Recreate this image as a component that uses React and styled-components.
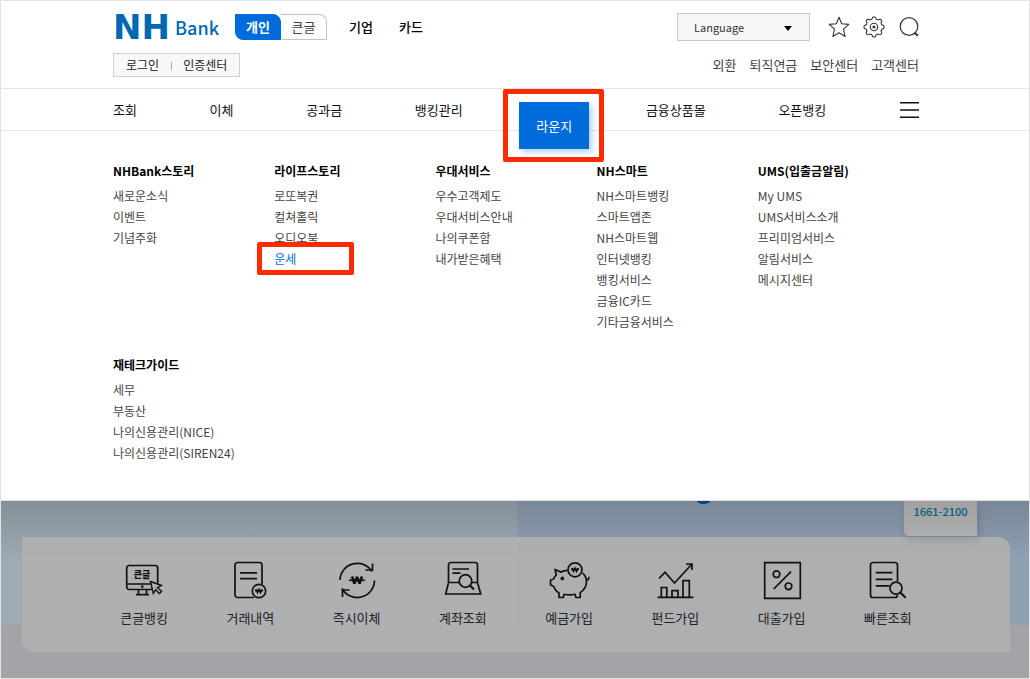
import React from 'react'
import styled, { createGlobalStyle } from 'styled-components'

const GlobalStyle = createGlobalStyle`
  *,
  *::before,
  *::after {
    box-sizing: border-box;
  }
  body {
    margin: 0;
    background: #fff;
    color: #111;
    font-family: "Noto Sans CJK KR", "Noto Sans", sans-serif;
    font-size: 13px;
    line-height: 20px;
  }
  a {
    color: inherit;
    text-decoration: none;
  }
  ul {
    margin: 0;
    padding: 0;
    list-style: none;
  }
  button,
  select {
    font: inherit;
    color: inherit;
  }
`

const Page = styled.div`
  border: 1px solid #e3e3e3;
`

const Container = styled.div`
  padding: 0 110px 0 112px;
`

const Header = styled.header`
  padding: 12px 0 11px;
`

const Bar = styled(Container)`
  display: flex;
  align-items: center;
  justify-content: space-between;
  & + & {
    margin-top: 12px;
  }
`

const Group = styled.div`
  display: flex;
  align-items: center;
  gap: ${({ $gap }) => $gap}px;
`

const Logo = styled.a`
  display: flex;
  align-items: center;
  justify-content: space-between;
  width: 106px;
  height: 28px;
  line-height: 28px;
  color: #0067b3;
`

const LogoMark = styled.span`
  font-family: "DejaVu Sans", sans-serif;
  font-size: 34px;
  font-weight: 700;
`

const LogoName = styled.span`
  font-size: 18px;
  font-weight: 500;
`

const Tabs = styled.div`
  display: flex;
  height: 26px;
  margin: 0 6px 0 16px;
`

const Tab = styled.a`
  width: 46px;
  border: 1px solid ${({ $active }) => ($active ? '#006bdb' : '#c4c4c4')};
  border-left-width: ${({ $active }) => ($active ? 1 : 0)}px;
  border-radius: ${({ $active }) => ($active ? '0 8px 0 8px' : '0 8px 0 0')};
  background: ${({ $active }) => ($active ? '#006bdb' : '#fff')};
  color: ${({ $active }) => ($active ? '#fff' : '#444')};
  font-weight: ${({ $active }) => ($active ? 700 : 400)};
  line-height: 23px;
  text-align: center;
`

const TopLink = styled.a`
  margin-left: 16px;
  font-weight: 500;
  color: #000;
  & + & {
    margin-left: 26px;
  }
`

const SelectBox = styled.div`
  position: relative;
  width: 133px;
  margin-right: 4px;
  svg {
    position: absolute;
    top: 13px;
    right: 18px;
    pointer-events: none;
  }
`

const Select = styled.select`
  display: block;
  width: 100%;
  height: 28px;
  padding: 0 16px;
  appearance: none;
  border: 1px solid #c9c9c9;
  border-radius: 0;
  background: #f8f8f8;
  color: #333;
  font-size: 11px;
`

const IconButton = styled.button`
  display: block;
  width: 20px;
  height: 20px;
  padding: 0;
  border: 0;
  background: none;
  svg {
    display: block;
    overflow: visible;
  }
`

const LoginBox = styled.div`
  display: flex;
  align-items: center;
  height: 24px;
  padding: 0 12px;
  border: 1px solid #cfcfcf;
  background: #f8f8f8;
  font-size: 12px;
  color: #222;
  a + a::before {
    content: "";
    display: inline-block;
    width: 1px;
    height: 8px;
    margin: 0 11px 0 12px;
    background: #aaa;
  }
`

const UtilLinks = styled(Group)`
  color: #444;
`

const Nav = styled.nav`
  height: 43px;
  border-top: 1px solid #e6e6e6;
  border-bottom: 1px solid #e6e6e6;
`

const NavRow = styled(Container)`
  display: flex;
  justify-content: space-between;
  height: 41px;
  font-size: 13px;
  line-height: 41px;
`

const ActiveLink = styled.a`
  position: relative;
  z-index: 2;
  height: 47px;
  margin: 13px -16px 0;
  padding: 0 17px;
  background: #006bdb;
  box-shadow: 3px 3px 6px rgba(0, 107, 219, .3);
  color: #fff;
  line-height: 47px;
  &::after {
    content: "";
    position: absolute;
    inset: -13px -15px -13px -16px;
    border: 5px solid #ff2a00;
    border-radius: 2px;
  }
`

const MenuButton = styled(IconButton)`
  align-self: center;
`

const Mega = styled.section`
  border-bottom: 1px solid #ddd;
  background: #fff;
`

const MegaGrid = styled(Container)`
  display: grid;
  grid-template-columns: repeat(5, 1fr);
  row-gap: 23px;
  padding-top: 30px;
  padding-bottom: 37px;
`

const MegaTitle = styled.h2`
  margin: 0 0 4px;
  font-size: 12px;
  font-weight: 700;
  line-height: 20px;
  color: #000;
`

const MegaItem = styled.li`
  position: relative;
  font-size: 12px;
  line-height: 21px;
  color: ${({ $marked }) => ($marked ? '#006bdb' : '#444')};
  &::after {
    content: "";
    display: ${({ $marked }) => ($marked ? 'block' : 'none')};
    position: absolute;
    top: -6px;
    left: -17px;
    width: 97px;
    height: 33px;
    border: 5px solid #ff2a00;
    border-radius: 2px;
  }
`

const Backdrop = styled.main`
  position: relative;
  padding: 36px 19px 26px 21px;
  background:
    linear-gradient(rgba(0, 0, 0, .16), rgba(0, 0, 0, 0)) 0 0 / 100% 60px no-repeat,
    linear-gradient(90deg, #9eaab4 calc(50% + 2px), #90a1b4 calc(50% + 2px)) 0 0 / 100% 124px no-repeat,
    #a4a4a8;
`

const Dot = styled.span`
  position: absolute;
  top: 0;
  left: 696px;
  width: 13px;
  height: 3px;
  border-radius: 0 0 50% 50% / 0 0 100% 100%;
  background: #00408a;
`

const CallBox = styled.a`
  position: absolute;
  top: 0;
  right: 52px;
  z-index: 1;
  width: 73px;
  height: 35px;
  border-radius: 0 0 0 5px;
  background: linear-gradient(#a0a0a0, #aeaeae);
  box-shadow: 2px 3px 8px rgba(0, 0, 0, .15);
  color: #006080;
  font-size: 11px;
  font-weight: 500;
  text-align: center;
`

const Quick = styled.ul`
  position: relative;
  display: grid;
  grid-template-columns: repeat(8, 1fr);
  padding: 23px 69px 24px;
  border-radius: 0 12px 0 12px;
  background: rgba(176, 176, 176, .9);
`

const QuickLink = styled.a`
  display: flex;
  flex-direction: column;
  align-items: center;
  gap: 8px;
  color: #222;
`

const Glyph = styled.svg`
  display: block;
  width: 40px;
  height: 40px;
  overflow: visible;
  fill: none;
  stroke: #111;
  stroke-width: 1.7;
  text {
    fill: #111;
    stroke: none;
    font-weight: 900;
    text-anchor: middle;
  }
`

const glyphs = {
  bigtext: (
    <>
      <rect x="2.7" y="5.5" width="31" height="24" rx="2.5" />
      <path d="M2.7 24H27M14.5 30v4M22.5 30v4M12 34.7h13" />
      <circle cx="18.3" cy="26.7" r=".5" />
      <text x="18" y="18" fontSize="9">큰글</text>
      <path fill="#afb0b1" strokeWidth="1.4" d="M26.5 21.5l11 4-4 2.2 4.2 3.6-2.4 2.2-3.6-3.8-2.4 3.8z" />
    </>
  ),
  history: (
    <>
      <path d="M24 37.5H7.5a2.5 2.5 0 0 1-2.5-2.5V5a2.5 2.5 0 0 1 2.5-2.5h22A2.5 2.5 0 0 1 32 5v19M10 12.8h17M10 18.7h17" />
      <circle cx="29" cy="31" r="6.7" />
      <path strokeWidth="1.6" d="M26 29.2l1.5 3.4 1.5-3.2 1.5 3.2 1.5-3.4M25 30.6h8" />
    </>
  ),
  transfer: (
    <>
      <path d="M3 20a17.3 17.3 0 0 1 32-8.5M37.5 20.5a17.3 17.3 0 0 1-32.5 8" />
      <path d="M35.5 3.5V10H28.5M5.5 37v-7h7" />
      <path strokeWidth="2.6" strokeLinejoin="bevel" d="M15 16.5l2.4 7 2.6-6.5 2.6 6.5 2.4-7" />
      <path strokeWidth="1.6" d="M12 20.3h16" />
    </>
  ),
  account: (
    <>
      <path d="M5.5 22.5V5A2.5 2.5 0 0 1 8 2.5h24A2.5 2.5 0 0 1 34.5 5v17.5M16 22.5H5.5L2.7 34h35l-3.2-11.5H29M9.5 9h16.5M9.5 13.2h8" />
      <circle cx="22.5" cy="21" r="6.3" />
      <path strokeWidth="2.2" d="M27 25.5l4 4" />
    </>
  ),
  saving: (
    <>
      <path strokeLinejoin="round" d="M18.5 10.3c-2.4.1-4.6.7-6.5 1.8L6 9.5l1.3 5.5c-1.3 1.3-2.3 2.6-3 4.3L1.5 20v5l3 1.2c1 2.8 2.9 5.1 5.5 6.8v4.5h4.2l1-3.2c3.2.8 7.6.8 10.8 0l1 3.2h4.2V32.6c4.2-2.8 6.3-6.6 6.3-11.1 0-3.3-1.3-6.2-3.8-8.4M37 20c2 .2 3-.8 3-3.2" />
      <circle cx="13.3" cy="18.4" r="1" fill="#111" />
      <circle cx="26" cy="9.8" r="7" />
      <path strokeWidth="1.6" d="M23 8l1.5 3.4L26 8.2l1.5 3.2L29 8M22 9.4h8" />
    </>
  ),
  fund: (
    <path d="M4 18.5l6-6.2 9.5 10.7L36.5 4.5M31 4h6v6M2.5 37.3h36M6.3 37V27.5h5.5V37M17 37v-6.3h6V37M28 37V20.7h6.3V37" />
  ),
  loan: (
    <>
      <path d="M2.7 2.7h35.6v35.6H2.7zM29 11.7L11.7 29" />
      <circle cx="14.5" cy="14.2" r="3.3" />
      <circle cx="26.5" cy="26.3" r="3.3" />
    </>
  ),
  search: (
    <>
      <path d="M29.5 21.5V5A2.5 2.5 0 0 0 27 2.5H5A2.5 2.5 0 0 0 2.5 5v30A2.5 2.5 0 0 0 5 37.5h22a2.5 2.5 0 0 0 2.5-2.5M7.7 12.7h16.7M7.7 19.3h16.7M7.7 25.8h14" />
      <circle cx="28" cy="28.2" r="6" />
      <path strokeWidth="2" d="M32.3 32.5l5.4 5.3" />
    </>
  ),
}

const navItems = ['조회', '이체', '공과금', '뱅킹관리', '라운지', '금융상품몰', '오픈뱅킹']

const megaMenu = [
  { title: 'NHBank스토리', items: ['새로운소식', '이벤트', '기념주화'] },
  { title: '라이프스토리', items: ['로또복권', '컬쳐홀릭', '오디오북', '운세'] },
  { title: '우대서비스', items: ['우수고객제도', '우대서비스안내', '나의쿠폰함', '내가받은혜택'] },
  {
    title: 'NH스마트',
    items: ['NH스마트뱅킹', '스마트앱존', 'NH스마트웹', '인터넷뱅킹', '뱅킹서비스', '금융IC카드', '기타금융서비스'],
  },
  { title: 'UMS(입출금알림)', items: ['My UMS', 'UMS서비스소개', '프리미엄서비스', '알림서비스', '메시지센터'] },
  { title: '재테크가이드', items: ['세무', '부동산', '나의신용관리(NICE)', '나의신용관리(SIREN24)'] },
]

const quickItems = [
  ['bigtext', '큰글뱅킹'],
  ['history', '거래내역'],
  ['transfer', '즉시이체'],
  ['account', '계좌조회'],
  ['saving', '예금가입'],
  ['fund', '펀드가입'],
  ['loan', '대출가입'],
  ['search', '빠른조회'],
]

// eight rounded teeth around the centre of a 20px box
const gearPath = Array.from({ length: 96 }, (_, i) => {
  const a = (i / 96) * Math.PI * 2
  const r = 9 + Math.tanh(2.2 * Math.cos(8 * a))
  return `${i ? 'L' : 'M'}${(10 + r * Math.cos(a)).toFixed(2)} ${(10 + r * Math.sin(a)).toFixed(2)}`
}).join('') + 'Z'

const StarIcon = () => (
  <svg width="20" height="20" fill="none" stroke="#333" strokeWidth="1.1" strokeLinejoin="round">
    <path d="M10 .3l2.7 6.5 7.1.6-5.3 4.7 1.6 7.4-6.1-3.7-6.1 3.7 1.6-7.4L.2 7.4l7.1-.6z" />
  </svg>
)

const GearIcon = () => (
  <svg width="20" height="20" fill="none" stroke="#333" strokeWidth="1.1">
    <path d={gearPath} />
    <circle cx="10" cy="10" r="3.7" />
    <circle cx="10" cy="10" r="1" fill="#222" />
  </svg>
)

const SearchIcon = () => (
  <svg width="20" height="20" fill="none" stroke="#333" strokeWidth="1.2">
    <circle cx="10" cy="9.5" r="8.8" />
    <path strokeWidth="2" d="M15.5 15.5l3.3 3.3" />
  </svg>
)

const MenuIcon = () => (
  <svg width="20" height="20" stroke="#111" strokeWidth="1.5">
    <path d="M1 2.7h19M1 10h19M1 17.2h19" />
  </svg>
)

const App = () => (
  <>
    <GlobalStyle />
    <Page>
      <Header>
        <Bar>
          <Group $gap={0}>
            <Logo href="#">
              <LogoMark>NH</LogoMark>
              <LogoName>Bank</LogoName>
            </Logo>
            <Tabs>
              <Tab href="#" $active>개인</Tab>
              <Tab href="#">큰글</Tab>
            </Tabs>
            <TopLink href="#">기업</TopLink>
            <TopLink href="#">카드</TopLink>
          </Group>
          <Group $gap={15}>
            <SelectBox>
              <Select aria-label="Language" defaultValue="lang">
                <option value="lang">Language</option>
              </Select>
              <svg width="8" height="5"><path d="M0 0h8L4 5z" /></svg>
            </SelectBox>
            <IconButton aria-label="즐겨찾기"><StarIcon /></IconButton>
            <IconButton aria-label="설정"><GearIcon /></IconButton>
            <IconButton aria-label="검색"><SearchIcon /></IconButton>
          </Group>
        </Bar>
        <Bar>
          <LoginBox>
            <a href="#">로그인</a>
            <a href="#">인증센터</a>
          </LoginBox>
          <UtilLinks $gap={13}>
            <a href="#">외환</a>
            <a href="#">퇴직연금</a>
            <a href="#">보안센터</a>
            <a href="#">고객센터</a>
          </UtilLinks>
        </Bar>
      </Header>

      <Nav>
        <NavRow>
          {navItems.map(item => (
            item === '라운지'
              ? <ActiveLink key={item} href="#">{item}</ActiveLink>
              : <a key={item} href="#">{item}</a>
          ))}
          <MenuButton aria-label="전체메뉴"><MenuIcon /></MenuButton>
        </NavRow>
      </Nav>

      <Mega>
        <MegaGrid>
          {megaMenu.map(({ title, items }) => (
            <div key={title}>
              <MegaTitle>{title}</MegaTitle>
              <ul>
                {items.map(item => (
                  <MegaItem key={item} $marked={item === '운세'}>
                    <a href="#">{item}</a>
                  </MegaItem>
                ))}
              </ul>
            </div>
          ))}
        </MegaGrid>
      </Mega>

      <Backdrop>
        <Dot />
        <CallBox href="#">1661-2100</CallBox>
        <Quick>
          {quickItems.map(([icon, label]) => (
            <li key={icon}>
              <QuickLink href="#">
                <Glyph viewBox="0 0 40 40">{glyphs[icon]}</Glyph>
                {label}
              </QuickLink>
            </li>
          ))}
        </Quick>
      </Backdrop>
    </Page>
  </>
)

export default App
